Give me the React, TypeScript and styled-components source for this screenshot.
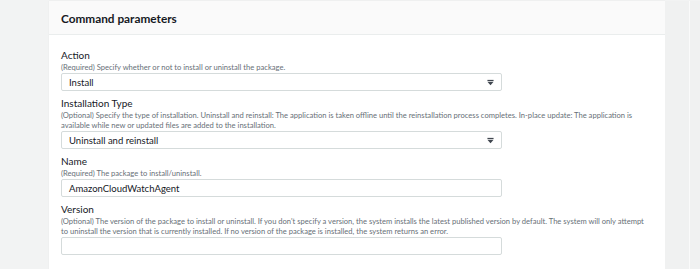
import React from "react";
import styled, { createGlobalStyle } from "styled-components";

const GlobalStyle = createGlobalStyle`
  html, body {
    margin: 0;
    padding: 0;
    background: #f2f3f3;
    font-family: Lato, "Open Sans", Arial, sans-serif;
    overflow: hidden;
  }
`;

const Page = styled.div`
  display: flex;
  height: 269px;
  padding-left: 49px;
  padding-top: 1px;
  box-sizing: border-box;
`;

const Card = styled.div`
  width: 616px;
  background: #ffffff;
  box-shadow: 0 0 1px rgba(0, 0, 0, 0.08);
`;

const Header = styled.div`
  height: 34px;
  background: #fafafa;
  border-bottom: 1px solid #eaeded;
  display: flex;
  align-items: center;
  padding-left: 12px;
  padding-top: 1px;
  box-sizing: border-box;
`;

const Title = styled.h2`
  margin: 0;
  font-size: 11.8px;
  font-weight: 700;
  color: #16191f;
`;

const Body = styled.div`
  padding: 13px 12px 0 12px;
  display: flex;
  flex-direction: column;
  gap: 5px;
`;

const Field = styled.div`
  display: flex;
  flex-direction: column;
`;

const Label = styled.div`
  font-size: 10px;
  line-height: 13px;
  padding-top: 1px;
  color: #16191f;
`;

const Desc = styled.div`
  max-width: 584px;
  font-size: 7.6px;
  line-height: 10px;
  color: #687078;
  margin-bottom: 1px;
`;

const Box = styled.div`
  width: 441px;
  height: 18px;
  box-sizing: border-box;
  border: 1px solid #d5dbdb;
  border-radius: 2px;
  display: flex;
  align-items: center;
  justify-content: space-between;
  padding: 0 7px;
  font-size: 9.5px;
  color: #16191f;
`;

const Caret = styled.svg`
  width: 7px;
  height: 7px;
`;

const SideStrip = styled.div`
  width: 24px;
  border-right: 1px solid #fafafa;
  background: #f0f1f1;
`;

const Rest = styled.div`
  flex: 1;
  background: #f0f1f1;
`;

type FieldDef = {
  label: string;
  desc: string;
  value: string;
  select?: boolean;
};

const fields: FieldDef[] = [
  {
    label: "Action",
    desc: "(Required) Specify whether or not to install or uninstall the package.",
    value: "Install",
    select: true,
  },
  {
    label: "Installation Type",
    desc:
      "(Optional) Specify the type of installation. Uninstall and reinstall: The application is taken offline until the reinstallation process completes. In-place update: The application is available while new or updated files are added to the installation.",
    value: "Uninstall and reinstall",
    select: true,
  },
  {
    label: "Name",
    desc: "(Required) The package to install/uninstall.",
    value: "AmazonCloudWatchAgent",
  },
  {
    label: "Version",
    desc:
      "(Optional) The version of the package to install or uninstall. If you don't specify a version, the system installs the latest published version by default. The system will only attempt to uninstall the version that is currently installed. If no version of the package is installed, the system returns an error.",
    value: "",
  },
];

const App: React.FC = () => {
  return (
    <>
      <GlobalStyle />
      <Page>
        <Card>
          <Header>
            <Title>Command parameters</Title>
          </Header>
          <Body>
            {fields.map((f) => (
              <Field key={f.label}>
                <Label>{f.label}</Label>
                <Desc>{f.desc}</Desc>
                <Box>
                  <span>{f.value}</span>
                  {f.select && (
                    <Caret viewBox="0 0 8 8">
                      <rect x="0.5" y="1" width="7" height="1.3" fill="#414750" />
                      <path d="M0.5 3 L7.5 3 L4 7 Z" fill="#414750" />
                    </Caret>
                  )}
                </Box>
              </Field>
            ))}
          </Body>
        </Card>
        <SideStrip />
        <Rest />
      </Page>
    </>
  );
};

export default App;
